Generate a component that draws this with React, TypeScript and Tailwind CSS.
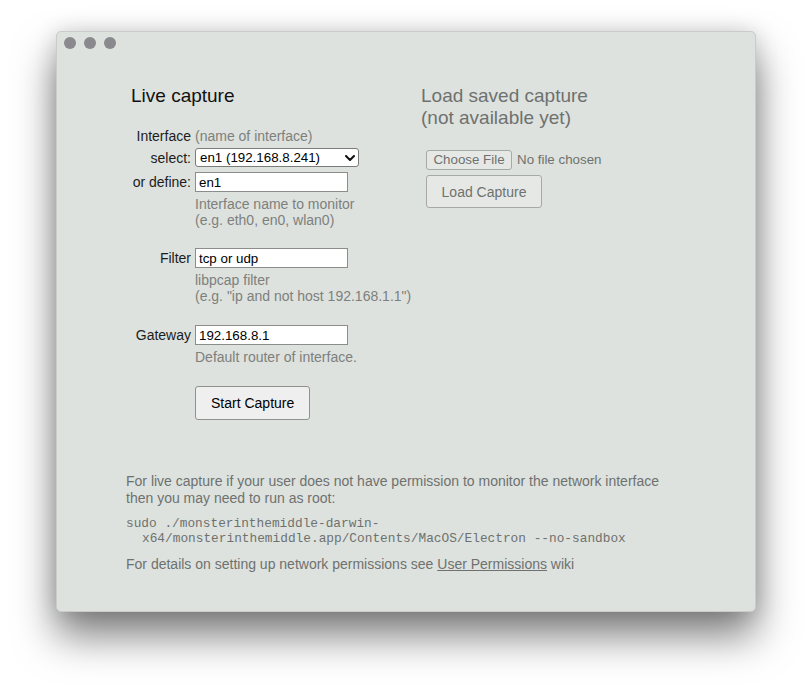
import React from "react";

const help = "text-[#7d807d]";

function Row({ label, children }: { label: string; children: React.ReactNode }) {
  return (
    <div className="flex items-center">
      <div className="w-[61px] shrink-0 text-right whitespace-nowrap">{label}</div>
      <div className="ml-1">{children}</div>
    </div>
  );
}

function TextInput({ value }: { value: string }) {
  return (
    <input
      readOnly
      value={value}
      className="w-[153px] h-[20px] bg-white border border-[#8b8d8b] px-[3px] text-[13.33px] text-black outline-none"
    />
  );
}

export default function App() {
  return (
    <div className="min-h-screen bg-white pt-[31px] pl-[56px] font-['Liberation_Sans',Arial,sans-serif] text-[14px] leading-[16px] text-[#1c1c1c]">
      <div className="w-[700px] h-[581px] rounded-[5px] bg-[#dde2de] border border-[#c9ccc9] shadow-[0_24px_40px_rgba(0,0,0,0.5),0_0_22px_rgba(0,0,0,0.15)] flex flex-col">
        {/* title bar */}
        <div className="flex gap-2 pt-[5px] pl-[7px]">
          <span className="w-3 h-3 rounded-full bg-[#8a898d]" />
          <span className="w-3 h-3 rounded-full bg-[#8a898d]" />
          <span className="w-3 h-3 rounded-full bg-[#8a898d]" />
        </div>

        <div className="flex mt-[36px]">
          {/* live capture */}
          <div className="w-[290px] ml-[73px]">
            <h3 className="pl-px text-[19px] leading-[22px] text-[#111]">Live capture</h3>

            <div className="mt-[21px]">
              <Row label="Interface">
                <span className={help}>(name of interface)</span>
              </Row>
            </div>

            <div className="mt-[4px]">
              <Row label="select:">
                <div className="relative w-[164px] h-[19px]">
                  <select
                    defaultValue="en1"
                    className="appearance-none w-full h-full bg-white border border-[#7a7c7a] rounded-[3px] pl-[4px] text-[13.33px] leading-[17px] text-black outline-none"
                  >
                    <option value="en1">en1 (192.168.8.241)</option>
                  </select>
                  <svg
                    className="absolute right-[4px] top-[7px] pointer-events-none"
                    width="10"
                    height="6"
                    viewBox="0 0 10 6"
                  >
                    <path d="M1 1 L5 5 L9 1" fill="none" stroke="#111" strokeWidth="2" strokeLinecap="round" strokeLinejoin="round" />
                  </svg>
                </div>
              </Row>
            </div>

            <div className="mt-[5px]">
              <Row label="or define:">
                <TextInput value="en1" />
              </Row>
            </div>

            <div className={`mt-[4px] pl-[65px] ${help}`}>
              Interface name to monitor
              <br />
              (e.g. eth0, en0, wlan0)
            </div>

            <div className="mt-[20px]">
              <Row label="Filter">
                <TextInput value="tcp or udp" />
              </Row>
            </div>

            <div className={`mt-[4px] pl-[65px] whitespace-nowrap ${help}`}>
              libpcap filter
              <br />
              (e.g. "ip and not host 192.168.1.1")
            </div>

            <div className="mt-[21px]">
              <Row label="Gateway">
                <TextInput value="192.168.8.1" />
              </Row>
            </div>

            <div className={`mt-[4px] pl-[65px] ${help}`}>Default router of interface.</div>

            <div className="mt-[21px] pl-[65px]">
              <button className="h-[34px] px-[15px] bg-[#efefef] border border-[#8f918f] rounded-[3px] text-[14px] text-black">
                Start Capture
              </button>
            </div>
          </div>

          {/* load saved capture */}
          <div className="ml-[1px]">
            <h3 className="text-[19px] leading-[22px] text-[#6f716f]">
              Load saved capture
              <br />
              (not available yet)
            </h3>
            <div className="mt-[21px] ml-[5px] flex items-center gap-[5px]">
              <button className="h-[20px] w-[86px] bg-[#e5e8e5] border border-[#a6a9a6] rounded-[3px] text-[13.33px] text-[#6f716f]">
                Choose File
              </button>
              <span className="text-[13.33px] text-[#6f716f]">No file chosen</span>
            </div>
            <div className="mt-[5px] ml-[5px]">
              <button className="h-[33px] w-[116px] bg-[#e5e8e5] border border-[#a6a9a6] rounded-[3px] text-[14px] text-[#6f716f]">
                Load Capture
              </button>
            </div>
          </div>
        </div>

        {/* permissions note */}
        <div className="mt-[53px] ml-[69px] text-[#6f716f] leading-[17px]">
          <p>
            For live capture if your user does not have permission to monitor the network interface
            <br />
            then you may need to run as root:
          </p>
          <div className="mt-[9px] font-['Liberation_Mono','Courier_New',monospace] text-[12.8px] leading-[15px]">
            <div>sudo ./monsterinthemiddle-darwin-</div>
            <div className="pl-4">x64/monsterinthemiddle.app/Contents/MacOS/Electron --no-sandbox</div>
          </div>
          <p className="mt-[10px]">
            For details on setting up network permissions see <span className="underline">User Permissions</span> wiki
          </p>
        </div>
      </div>
    </div>
  );
}
